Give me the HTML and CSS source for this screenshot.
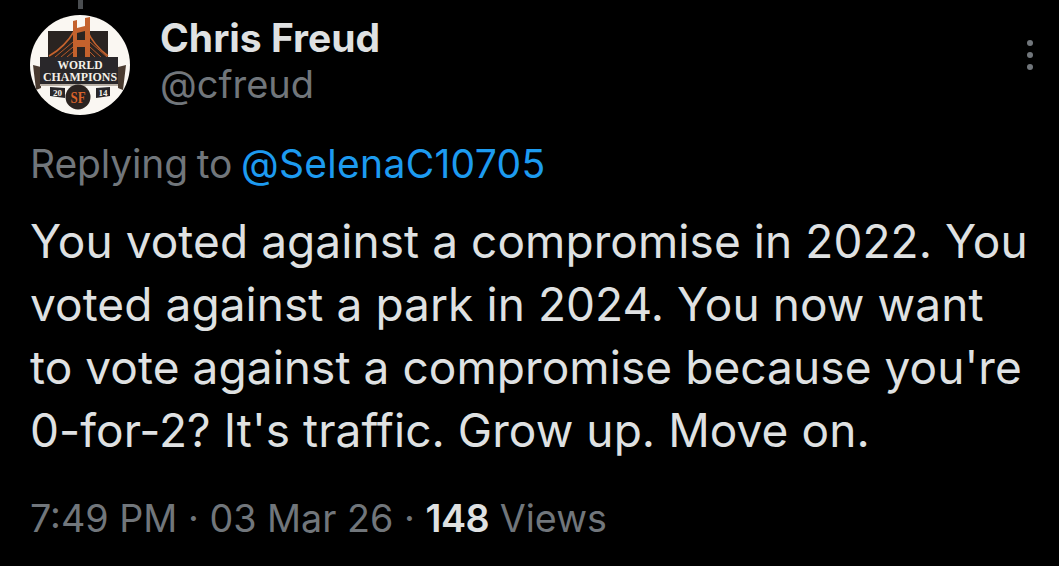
FILE: index.html
```html
<!DOCTYPE html>
<html lang="en">
<head>
<meta charset="utf-8">
<title>Chris Freud</title>
<link rel="stylesheet" href="styles.css">
</head>
<body>
<main class="tweet">
  <span class="thread"></span>
  <header class="head">
    <svg class="avatar" viewBox="30 15 100 100" width="100" height="100" aria-hidden="true">
      <defs><clipPath id="c"><circle cx="80" cy="65" r="50"/></clipPath></defs>
      <circle cx="80" cy="65" r="50" fill="#faf7f2"/>
      <g clip-path="url(#c)">
        <rect x="48" y="31" width="60" height="26" fill="#2a2421"/>
        <path d="M49 56 C60 50 68 42 75 30 M87 30 C92 42 100 50 108 56" fill="none" stroke="#c4622d" stroke-width="1.6"/>
        <path d="M55 57 L73 42 M61 57 L73 47 M67 57 L73 52 M107 57 L90 42 M101 57 L90 47 M95 57 L90 52" stroke="#b6582a" stroke-width="1"/>
        <path d="M73 57 L73 21 L77 20 L77 28 L85 26 L85 18 L90 17 L90 57 L85 57 L85 47 L77 47 L77 57 Z M77 33 V40 H85 V31 Z" fill="#c4622d" fill-rule="evenodd"/>
        <path d="M33 65 L41 67 V88 L36 90 Z M126 65 L118 67 V88 L123 90 Z" fill="#4a3b30"/>
        <rect x="40" y="57" width="78" height="27" fill="#29272a"/>
        <rect x="40" y="84" width="78" height="2" fill="#b9b0a5"/>
        <text class="logo-text" x="80" y="69" font-size="11.5" textLength="45" lengthAdjust="spacingAndGlyphs">WORLD</text>
        <text class="logo-text" x="80" y="81" font-size="11.5" textLength="74" lengthAdjust="spacingAndGlyphs">CHAMPIONS</text>
        <path d="M50 87 L65 88 V98 L50 96 Z M110 87 L96 88 V98 L110 96 Z" fill="#29272a"/>
        <text class="logo-text" x="57.500" y="96" font-size="9">20</text>
        <text class="logo-text" x="103" y="96" font-size="9">14</text>
        <circle cx="78" cy="97" r="12.500" fill="#2b2320"/>
        <text class="logo-sf" x="78" y="103" font-size="17" textLength="15" lengthAdjust="spacingAndGlyphs">SF</text>
      </g>
    </svg>
    <div class="names">
      <div class="name">Chris Freud</div>
      <div class="handle">@cfreud</div>
    </div>
    <div class="more" aria-label="More"><i></i><i></i><i></i></div>
  </header>
  <p class="reply">Replying to <a class="mention">@SelenaC10705</a></p>
  <p class="body">You voted against a compromise in 2022. You<br>voted against a park in 2024. You now want<br>to vote against a compromise because you're<br>0-for-2? It's traffic. Grow up. Move on.</p>
  <p class="meta">7:49 PM · 03 Mar 26 · <b>148</b> Views</p>
</main>
</body>
</html>
```
FILE: styles.css
```css
html, body { margin: 0; height: 100%; background: #000; overflow: hidden; }
body { font-family: Inter, "Liberation Sans", sans-serif; }
.tweet { position: relative; height: 566px; box-sizing: border-box; padding: 15px 0 0 30px; }
.thread { position: absolute; left: 78px; top: 0; width: 5px; height: 9px; background: #4a4d50; }
.head { display: flex; align-items: flex-start; }
.avatar { flex: none; display: block; }
.logo-text { font-family: "Liberation Serif", serif; font-weight: 700; fill: #f4f0e8; text-anchor: middle; }
.logo-sf { font-family: "Liberation Serif", serif; font-weight: 700; fill: #d9622a; text-anchor: middle; }
.names { margin-left: 30px; }
.name { color: #dfe1e2; font-size: 39px; line-height: 46px; font-weight: 700; }
.handle { color: #71767b; font-size: 38px; line-height: 46px; }
.more { margin-left: auto; margin-right: 26px; margin-top: 25px; display: flex; flex-direction: column; gap: 6px; }
.more i { display: block; width: 6px; height: 6px; border-radius: 50%; background: #71767b; }
.reply { margin: 25px 0 0; color: #71767b; font-size: 39px; line-height: 48px; letter-spacing: -0.15px; word-spacing: -2px; }
.mention { color: #1d9bf0; letter-spacing: 0.3px; }
.body { margin: 22px 0 0; color: #dfe1e2; font-size: 46px; line-height: 63px; letter-spacing: 0.07px; }
.meta { margin: 33px 0 0; color: #71767b; font-size: 37.7px; line-height: 46px; }
.meta b { color: #dfe1e2; font-weight: 600; letter-spacing: -0.5px; }
```
